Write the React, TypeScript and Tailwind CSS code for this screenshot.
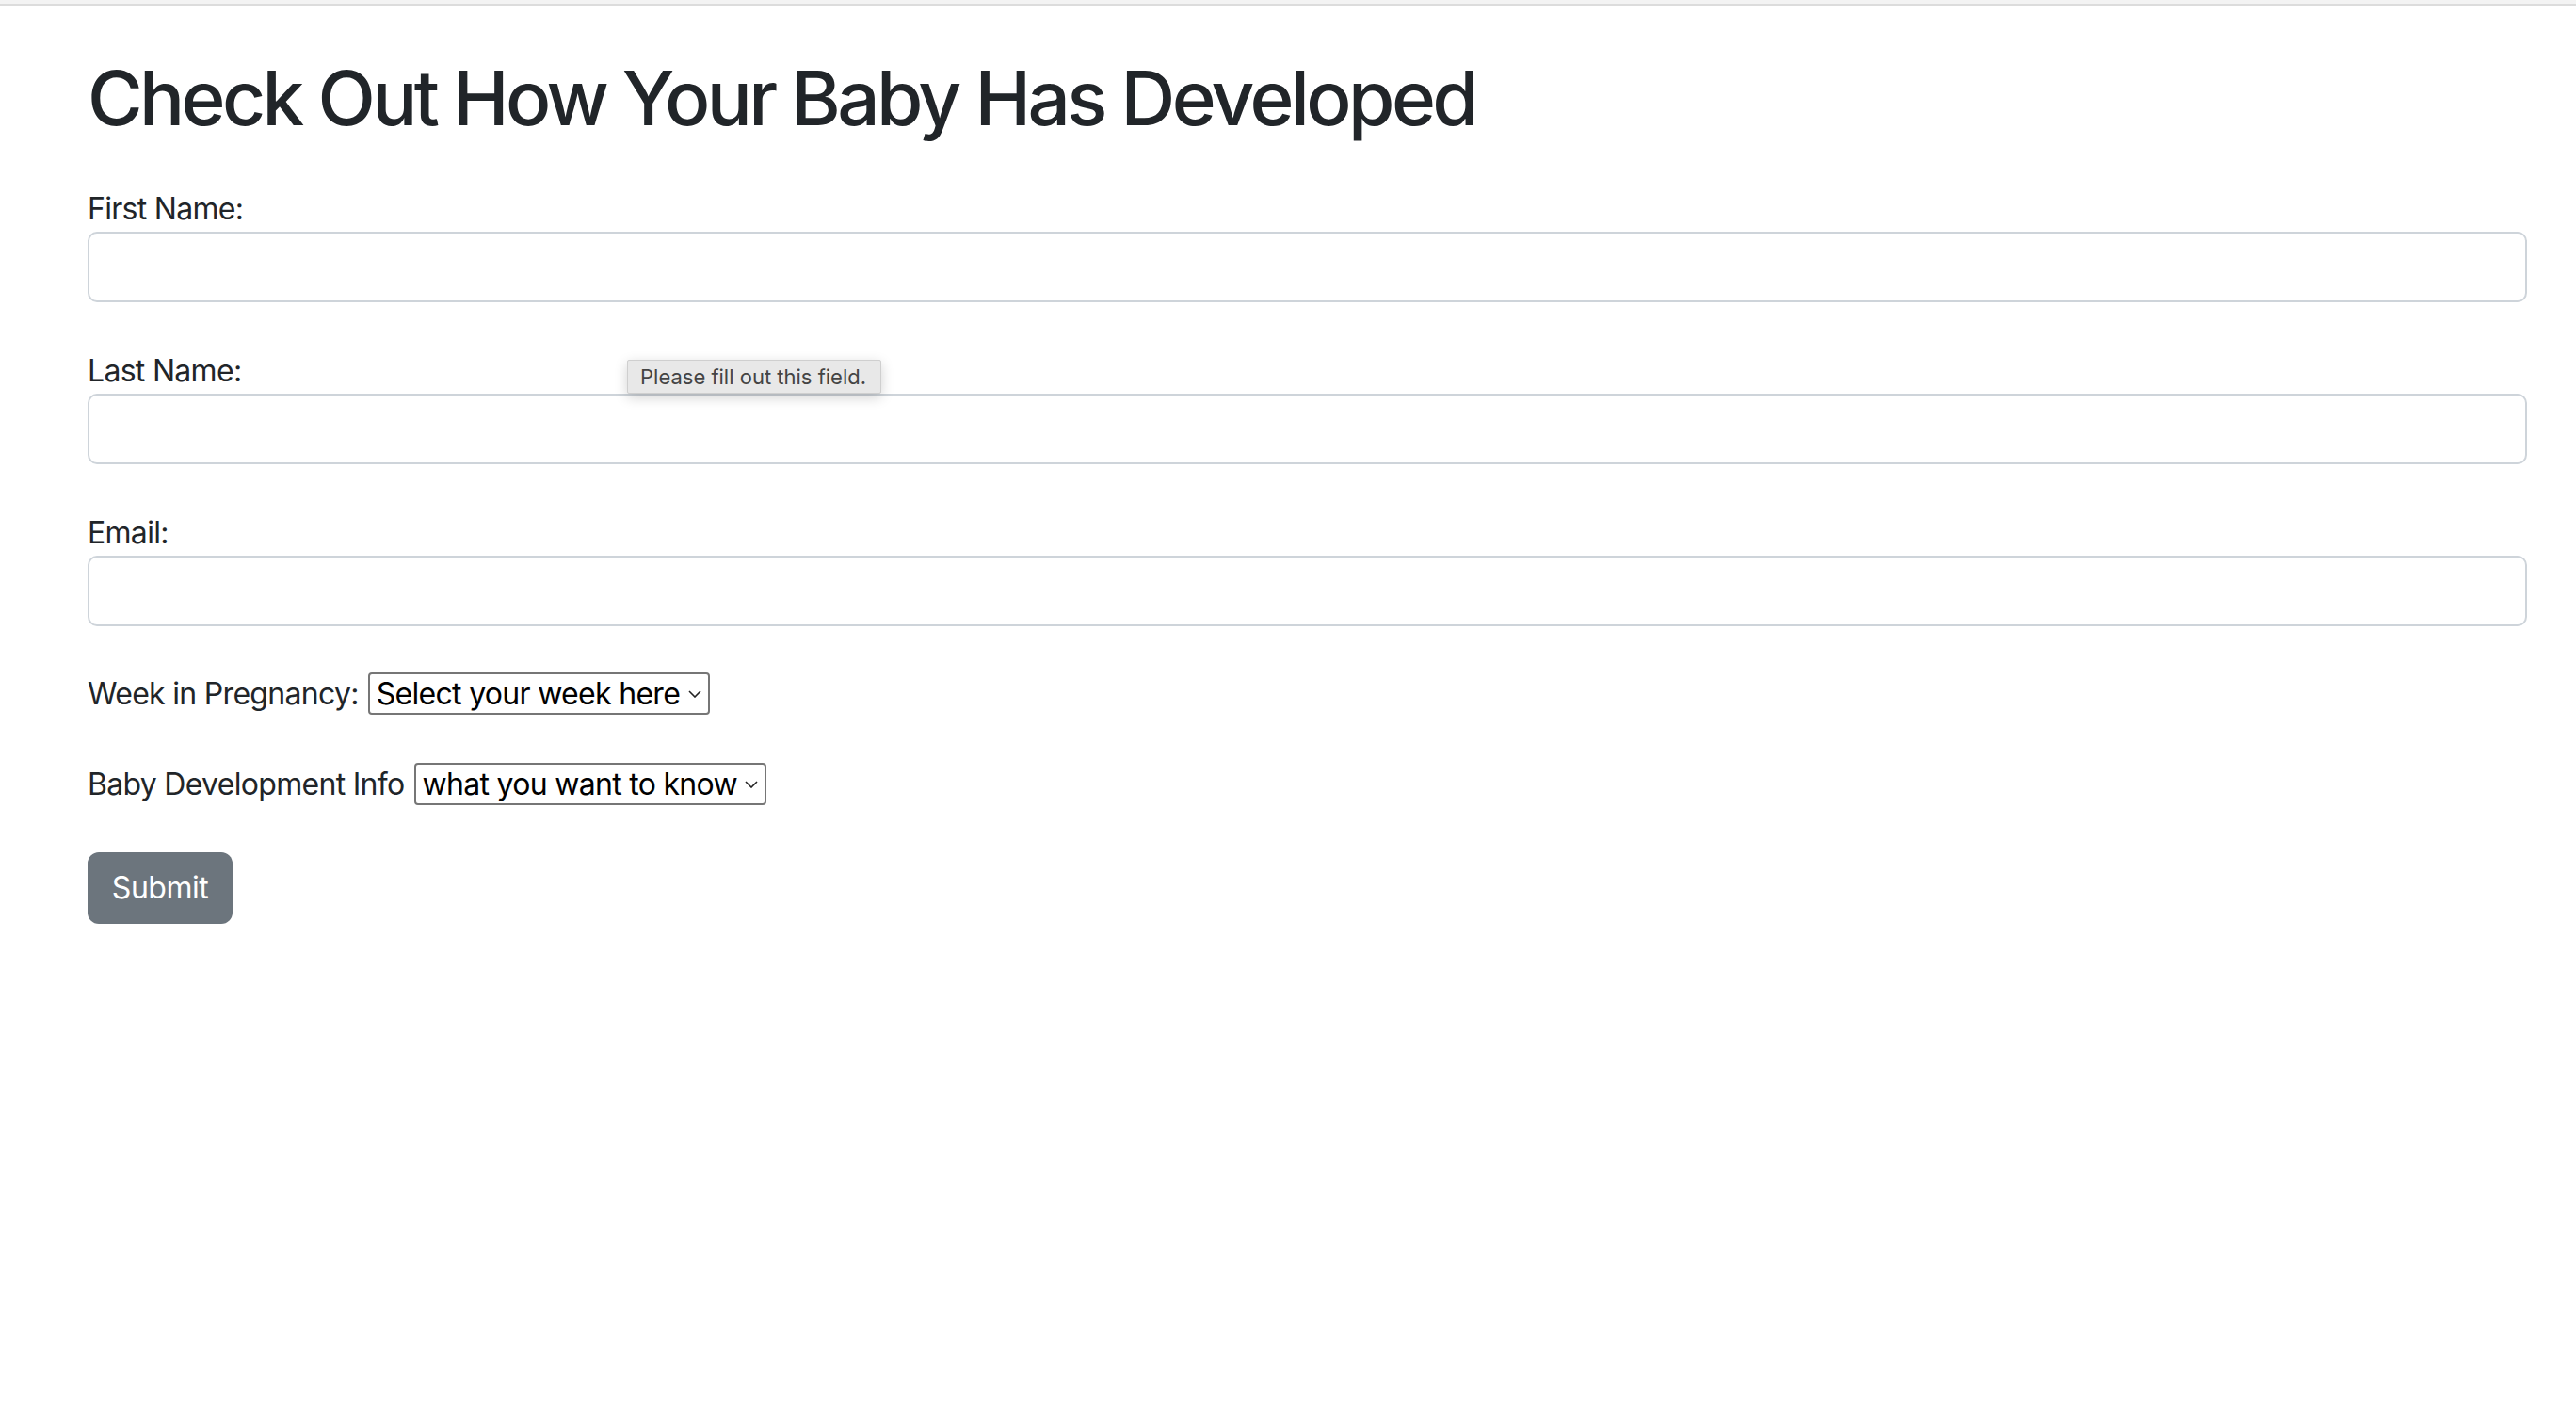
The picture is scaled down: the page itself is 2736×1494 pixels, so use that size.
import React from "react";

const font = { fontFamily: "Inter, 'Noto Sans', sans-serif" };

function Chevron() {
  return (
    <svg
      width="14"
      height="8"
      viewBox="0 0 14 8"
      className="pointer-events-none absolute right-[9px] top-1/2 -translate-y-1/2"
    >
      <path d="M1 1 L7 7 L13 1" fill="none" stroke="#222" strokeWidth="1.6" />
    </svg>
  );
}

function Field({ label, first }: { label: string; first?: boolean }) {
  return (
    <div className={first ? "mt-[46px]" : "mt-[49px]"}>
      <label className="block h-[47px] text-[32px] leading-[48px] tracking-[-0.7px] text-[#212529]">
        {label}
      </label>
      <input
        type="text"
        className="mt-[1px] block h-[75px] w-full rounded-[10px] border-2 border-[#ced4da] bg-white px-[24px] text-[32px] outline-none"
      />
    </div>
  );
}

export default function App() {
  return (
    <div className="relative min-h-[1494px] w-full bg-white" style={font}>
      <div className="h-[4px] bg-[#f3f3f3]" />
      <div className="h-[2px] bg-[#dcdcdc]" />
      <div className="pl-[93px] pr-[52px] pt-[50px]">
        <h1 className="text-[80px] font-medium leading-[96px] tracking-[-3.6px] text-[#212529]">
          Check Out How Your Baby Has Developed
        </h1>
        <form>
          <Field label="First Name:" first />
          <Field label="Last Name:" />
          <Field label="Email:" />

          <div className="mt-[49px] flex h-[45px] items-center gap-[10px] text-[32px] leading-[45px] tracking-[-0.7px] text-[#212529]">
            <span>Week in Pregnancy:</span>
            <div className="relative">
              <select className="block h-[45px] w-[363px] appearance-none rounded-[4px] border-2 border-[#767676] bg-white pl-[7px] text-[32px] leading-[41px] tracking-[-0.7px] text-black outline-none">
                <option>Select your week here</option>
              </select>
              <Chevron />
            </div>
          </div>

          <div className="mt-[51px] flex h-[45px] items-center gap-[10px] text-[32px] leading-[45px] tracking-[-0.7px] text-[#212529]">
            <span>Baby Development Info</span>
            <div className="relative">
              <select className="block h-[45px] w-[374px] appearance-none rounded-[4px] border-2 border-[#767676] bg-white pl-[7px] text-[32px] leading-[41px] tracking-[-0.7px] text-black outline-none">
                <option>what you want to know</option>
              </select>
              <Chevron />
            </div>
          </div>

          <button
            type="button"
            className="mt-[50px] flex h-[76px] w-[154px] items-center justify-center rounded-[12px] bg-[#6c757d] text-[32px] tracking-[-0.5px] text-white"
          >
            Submit
          </button>
        </form>
      </div>

      <div className="absolute left-[666px] top-[382px] flex h-[36px] w-[270px] items-center rounded-[2px] border border-[#cfcfcf] bg-[#e8e8e8] pl-[13px] text-[22px] text-[#444] shadow-[0_4px_14px_rgba(0,0,0,0.18)]">
        Please fill out this field.
      </div>
    </div>
  );
}
